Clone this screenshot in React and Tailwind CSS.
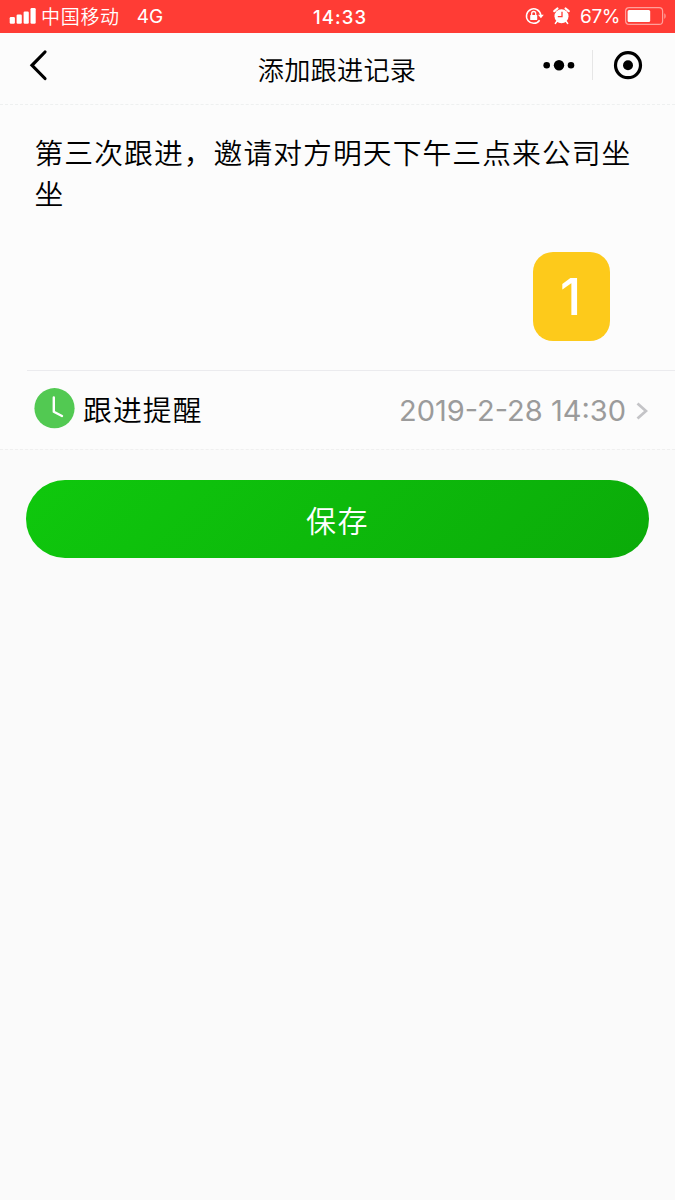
const CJK = "font-['Inter','Noto_Sans_CJK_SC',sans-serif]";

function StatusBar() {
  return (
    <div className="relative flex h-[32.5px] items-center justify-between bg-[#ff3c35] pl-[9px] pr-[8px] text-white">
      <div className="flex items-center">
        <svg width="28" height="18" viewBox="0 0 28 18" fill="#fff" className="shrink-0">
          <rect x="0.7" y="10" width="5.2" height="6.8" rx="1.2" />
          <rect x="7.6" y="7.5" width="5.2" height="9.3" rx="1.2" />
          <rect x="14.6" y="4.6" width="5.2" height="12.2" rx="1.2" />
          <rect x="21.5" y="1" width="5.2" height="15.8" rx="1.2" />
        </svg>
        <span className="ml-[4px] pt-[4px] text-[19px] font-[350] leading-[32px] tracking-[0.7px]">中国移动</span>
        <span className="ml-[17px] pt-[2px] text-[19px] leading-[32px]">4G</span>
      </div>
      <div className="flex items-center">
        <svg width="19" height="18" viewBox="0 0 19 18" fill="none" className="mr-px shrink-0">
          <path d="M14.6 13.2A7.2 7.2 0 1 1 15.8 8" stroke="#fff" strokeWidth="1.5" />
          <path d="M13 7.7h5.8l-2.9 3.6z" fill="#fff" />
          <rect x="5.2" y="8" width="7" height="5" rx="0.6" fill="#fff" />
          <path d="M6.7 8V6.5a2 2 0 0 1 4 0V8" stroke="#fff" strokeWidth="1.3" />
        </svg>
        <svg width="17" height="18" viewBox="0 0 17 18" fill="none" className="ml-[8px] mr-px shrink-0">
          <circle cx="8.5" cy="9.2" r="7" fill="#fff" />
          <path d="M1.3 4.2L4.4 1.5M15.7 4.2L12.6 1.5" stroke="#fff" strokeWidth="2.2" strokeLinecap="round" />
          <path d="M3.8 14.5L2.4 16.4M13.2 14.5L14.6 16.4" stroke="#fff" strokeWidth="1.6" strokeLinecap="round" />
          <path d="M9 4.7V9.6H4.8" stroke="#ff3c35" strokeWidth="1.3" />
        </svg>
        <span className="ml-[9px] w-[40px] whitespace-nowrap pt-[2px] text-[19px] leading-[32px] tracking-[-0.4px]">67%</span>
        <svg width="42" height="18" viewBox="0 0 42 18" fill="none" className="ml-[5px] shrink-0">
          <rect x="0.6" y="0.6" width="37" height="16.8" rx="3.5" stroke="#ffa09b" strokeWidth="1.2" />
          <rect x="2.6" y="3" width="22.6" height="12" rx="1.5" fill="#fff" />
          <path d="M39.3 6.2c1.8.8 1.8 4.8 0 5.6z" fill="#ffa09b" />
        </svg>
      </div>
      <span className="absolute left-[313px] top-[1px] whitespace-nowrap text-[18.5px] font-medium leading-[32px] tracking-[1.1px]">
        14:33
      </span>
    </div>
  );
}

function NavBar() {
  return (
    <header className="grid h-[72px] grid-cols-[1fr_auto_1fr] items-center border-b border-dashed border-[#eef0f0]">
      <svg width="20" height="32" viewBox="0 0 20 32" fill="none" className="mb-[6px] ml-[28px]">
        <path d="M17 3L4 16.3L17 29.5" stroke="#000" strokeWidth="3.2" strokeLinecap="round" />
      </svg>
      <h1 className="pr-[1px] pt-[5px] text-[26.2px] font-[350] leading-[40px] tracking-[0.2px] text-black">添加跟进记录</h1>
      <div className="mb-[6px] flex items-center justify-end pr-[32px]">
        <svg width="32" height="12" viewBox="0 0 32 12">
          <circle cx="3.7" cy="6.3" r="3.3" />
          <circle cx="16" cy="6.3" r="5.2" />
          <circle cx="28" cy="6.3" r="3.3" />
        </svg>
        <div className="ml-[17px] h-[30px] w-px bg-[#e6e6e6]" />
        <svg width="30" height="30" viewBox="0 0 30 30" className="ml-[20px]">
          <circle cx="15" cy="15.2" r="12.5" fill="none" stroke="#000" strokeWidth="3.2" />
          <circle cx="15" cy="15.2" r="5" />
        </svg>
      </div>
    </header>
  );
}

export default function App() {
  return (
    <div className={`flex min-h-[1200px] w-[675px] flex-col bg-[#fafafa] ${CJK}`}>
      <StatusBar />
      <main className="bg-[#fcfcfc]">
        <NavBar />
        <section className="flex h-[265.5px] flex-col pl-[34.5px] pr-[30px] pt-[28.5px]">
          <p className="text-[28.8px] font-[350] leading-[41px] tracking-[1.05px] text-black">
            第三次跟进，邀请对方明天下午三点来公司坐坐
          </p>
          <div className="mr-[35px] mt-[36.5px] flex h-[89px] w-[77px] items-center justify-center self-end rounded-[20px] bg-[#fdca1b] text-[51px] font-medium leading-none text-white">
            <span className="pr-[2px] pt-[1px]">1</span>
          </div>
        </section>
        <section className="ml-[27px] flex h-[79px] items-center border-t border-[#ebebee] pl-[7px] pr-[27px]">
          <svg width="41" height="41" viewBox="0 0 41 41" fill="none" className="mb-[4px]">
            <circle cx="20.5" cy="20.2" r="20.1" fill="#52c952" />
            <path d="M19.8 9.5V23.7L28 28" stroke="#fff" strokeWidth="2.4" strokeLinecap="round" strokeLinejoin="round" />
          </svg>
          <span className="ml-[8px] text-[28.8px] font-[350] leading-[41px] tracking-[1.1px] text-black">跟进提醒</span>
          <span className="ml-auto whitespace-nowrap pt-[2px] text-[29px] leading-[40px] text-[#9b9b9b]">2019-2-28 14:30</span>
          <svg width="12" height="18" viewBox="0 0 12 18" fill="none" className="ml-[10px] mt-[1px]">
            <path d="M1.5 1.5L10 9L1.5 16.5" stroke="#c4c4c7" strokeWidth="2.8" />
          </svg>
        </section>
      </main>
      <div className="border-t border-dashed border-[#efefef] px-[26px] pt-[30px]">
        <button className="h-[78px] w-full rounded-full bg-linear-135 from-[#0fc80d] to-[#0bab09] pt-[4px] text-[30px] font-[350] tracking-[1.5px] text-white">
          保存
        </button>
      </div>
    </div>
  );
}
